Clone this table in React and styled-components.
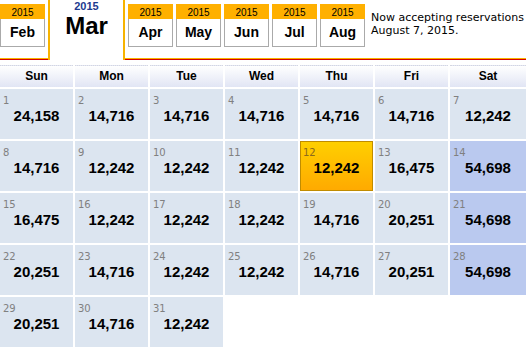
import React from 'react';
import styled, { createGlobalStyle, css } from 'styled-components';

const GlobalStyle = createGlobalStyle`
  html, body { margin: 0; padding: 0; background: #fff; }
  body { width: 526px; overflow: hidden; font-family: "Liberation Sans", Arial, sans-serif; color: #000; }
`;

const Page = styled.div`
  width: 526px;
`;

const TabBar = styled.div`
  display: flex;
  align-items: flex-start;
  gap: 3px;
  height: 60px;
  box-sizing: border-box;
  border-bottom: 1px solid #d80000;
  box-shadow: inset 0 -1px 0 #f7b300;
`;

const MonthTab = styled.div`
  flex: none;
  width: 45px;
  margin-top: 4px;
  text-align: center;
`;

const TabYear = styled.div`
  height: 12px;
  padding-top: 3px;
  line-height: 12px;
  background: #ffb000;
  font-size: 10px;
`;

const TabMonth = styled.div`
  height: 27px;
  line-height: 27px;
  border: 1px solid #aaa;
  border-top: none;
  background: #fff;
  font-size: 14px;
  font-weight: bold;
`;

const ActiveTab = styled.div`
  flex: none;
  width: 73px;
  height: 60px;
  border-left: 2px solid #f7b300;
  border-right: 2px solid #f7b300;
  background: #fff;
  text-align: center;
`;

const ActiveYear = styled.div`
  font-size: 11px;
  font-weight: bold;
  line-height: 12px;
  color: #1c3a8f;
`;

const ActiveMonth = styled.div`
  font-size: 24px;
  font-weight: bold;
  line-height: 28px;
`;

const Notice = styled.div`
  margin: 11px 0 0 3px;
  font-family: "DejaVu Sans", Verdana, sans-serif;
  font-size: 11px;
  line-height: 13px;
  white-space: nowrap;
`;

const Calendar = styled.div`
  display: grid;
  grid-template-columns: repeat(6, 73px) 1fr;
  gap: 2px;
  margin-top: 5px;
`;

const DayName = styled.div`
  height: 21px;
  line-height: 21px;
  border-top: 1px dotted #d4d6e0;
  background: linear-gradient(#ffffff, #e1e5f4);
  text-align: center;
  font-size: 12px;
  font-weight: bold;
`;

const Day = styled.div`
  box-sizing: border-box;
  height: 50px;
  padding: 6px 3px 0;
  background: #dce5f0;
  ${p => p.$peak && css`
    background: #bac9ef;
  `}
  ${p => p.$selected && css`
    border: 1px solid #c08c00;
    padding: 5px 2px 0;
    background: linear-gradient(#ffcf00, #ffaa00);
  `}
  ${p => p.$empty && css`
    background: transparent;
  `}
`;

const DayNum = styled.div`
  font-family: "DejaVu Sans", Verdana, sans-serif;
  font-size: 10px;
  line-height: 12px;
  color: ${p => (p.$selected ? '#8c6a1c' : '#808080')};
`;

const Price = styled.div`
  text-align: center;
  font-size: 15px;
  font-weight: bold;
  line-height: 18px;
`;

const before = ['Feb'];
const after = ['Apr', 'May', 'Jun', 'Jul', 'Aug'];
const dayNames = ['Sun', 'Mon', 'Tue', 'Wed', 'Thu', 'Fri', 'Sat'];
const prices = [
  '24,158', '14,716', '14,716', '14,716', '14,716', '14,716', '12,242',
  '14,716', '12,242', '12,242', '12,242', '12,242', '16,475', '54,698',
  '16,475', '12,242', '12,242', '12,242', '14,716', '20,251', '54,698',
  '20,251', '14,716', '12,242', '12,242', '14,716', '20,251', '54,698',
  '20,251', '14,716', '12,242',
];

const Tab = ({ name }) => (
  <MonthTab>
    <TabYear>2015</TabYear>
    <TabMonth>{name}</TabMonth>
  </MonthTab>
);

export default function App() {
  const empties = 35 - prices.length;
  return (
    <Page>
      <GlobalStyle />
      <TabBar>
        {before.map(m => <Tab key={m} name={m} />)}
        <ActiveTab>
          <ActiveYear>2015</ActiveYear>
          <ActiveMonth>Mar</ActiveMonth>
        </ActiveTab>
        {after.map(m => <Tab key={m} name={m} />)}
        <Notice>
          Now accepting reservations<br />August 7, 2015.
        </Notice>
      </TabBar>
      <Calendar>
        {dayNames.map(d => <DayName key={d}>{d}</DayName>)}
        {prices.map((p, i) => {
          const day = i + 1;
          const selected = day === 12;
          const peak = day === 14 || day === 21 || day === 28;
          return (
            <Day key={day} $selected={selected} $peak={peak}>
              <DayNum $selected={selected}>{day}</DayNum>
              <Price>{p}</Price>
            </Day>
          );
        })}
        {Array.from({ length: empties }, (_, i) => <Day key={'e' + i} $empty />)}
      </Calendar>
    </Page>
  );
}
